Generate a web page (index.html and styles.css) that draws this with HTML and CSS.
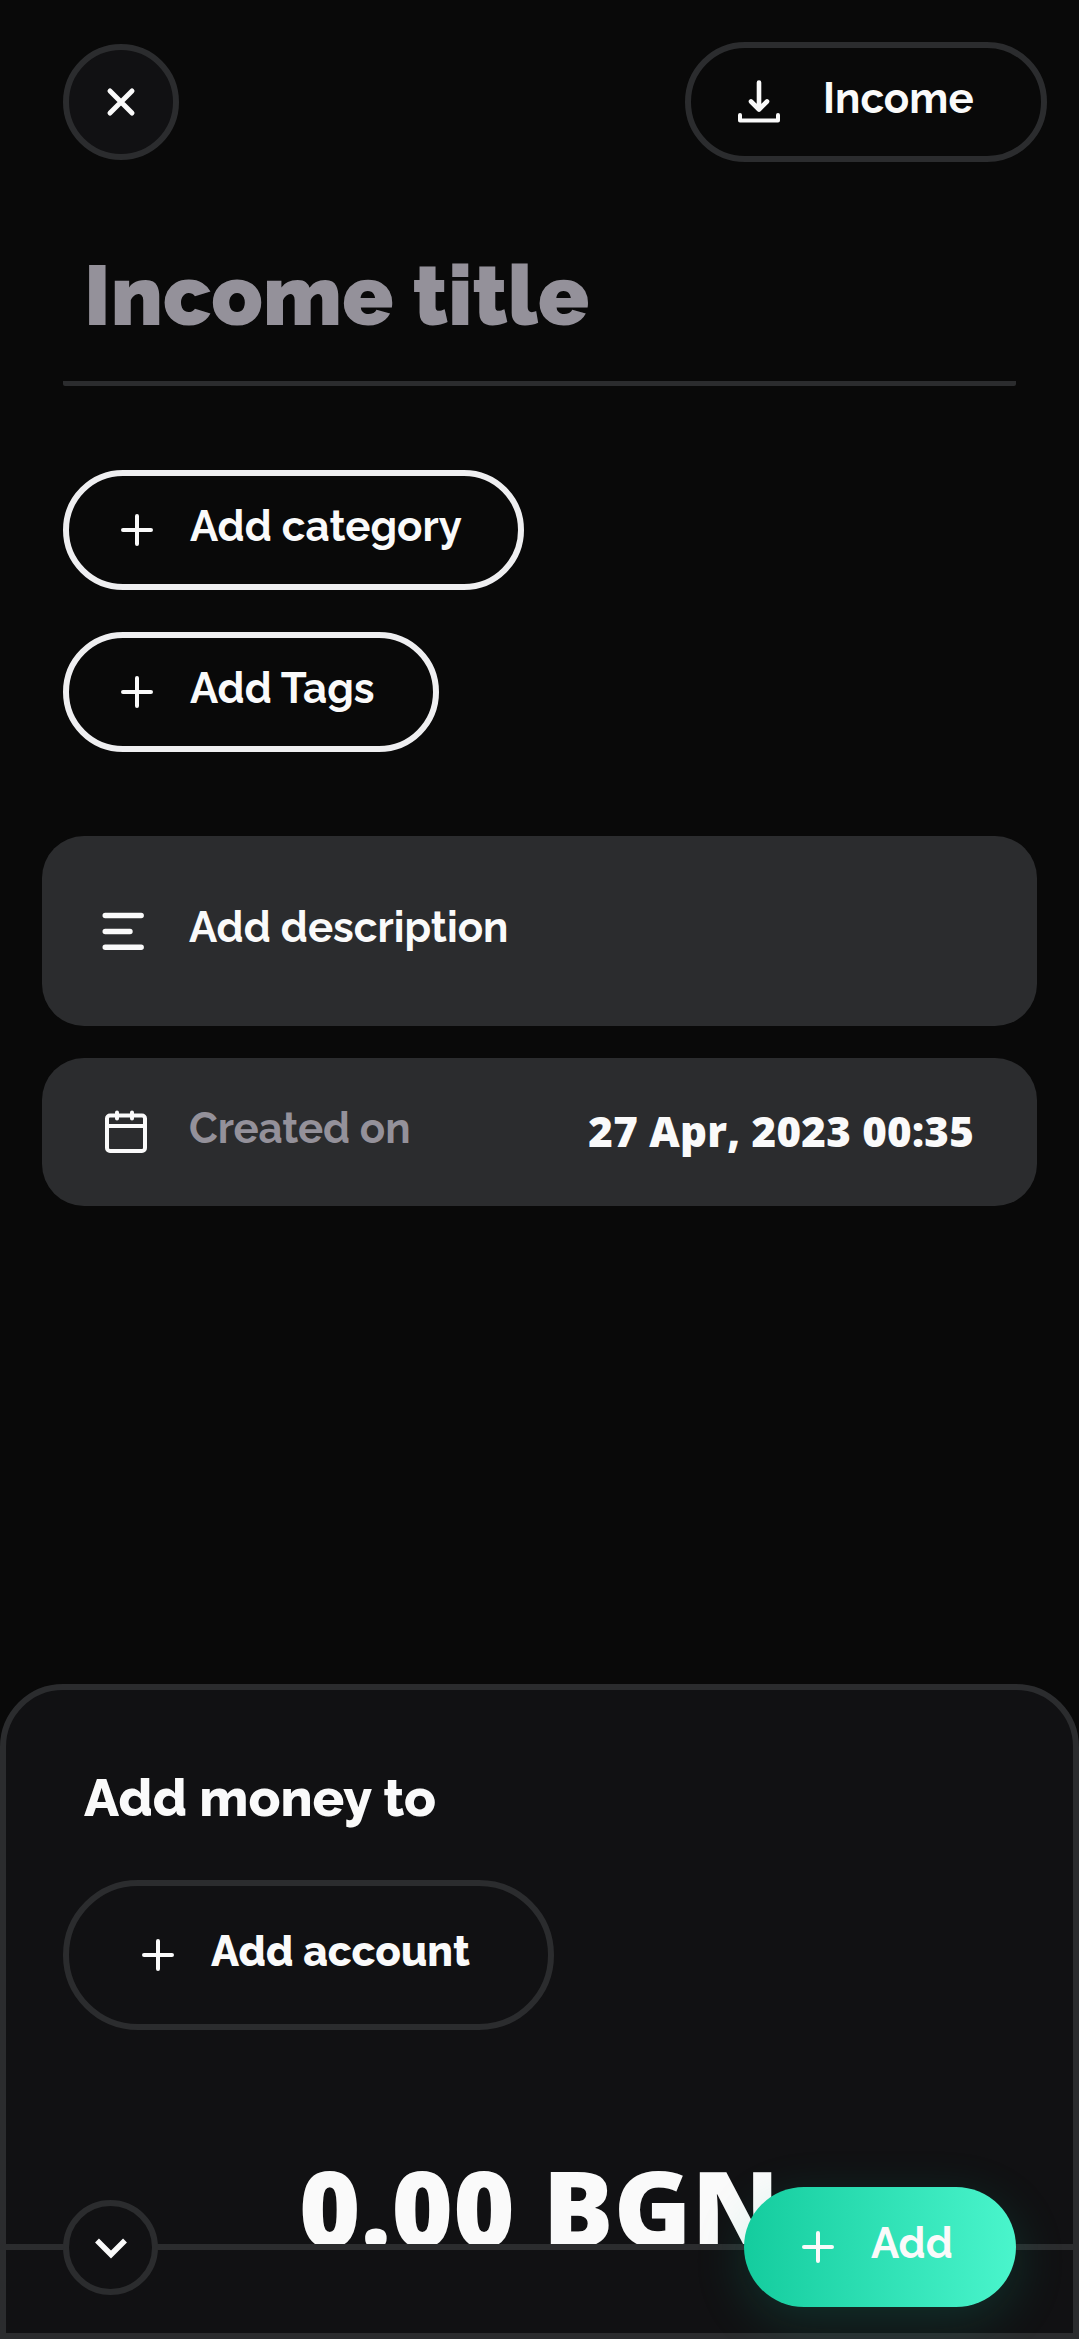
FILE: index.html
```html
<!DOCTYPE html>
<html lang="en">
<head>
<meta charset="utf-8">
<title>Income</title>
<link rel="stylesheet" href="styles.css">
</head>
<body>
<main class="screen">
  <header class="topbar">
    <button class="round close" aria-label="Close">
      <svg width="116" height="116" viewBox="0 0 116 116" class="icon"><path d="M47 47 69 69M69 47 47 69" stroke-width="5"/></svg>
    </button>
    <button class="pill type">
      <svg width="42" height="44" viewBox="0 0 42 44" class="icon"><path d="M21 2.500V29M13 21.500l8 8 8-8" stroke-width="4.600"/><path d="M2 35v5.500H40V35" stroke-width="4"/></svg>
      <span class="label">Income</span>
    </button>
  </header>

  <h1 class="title">Income title</h1>

  <section class="chips">
    <button class="pill light category">
      <svg width="32" height="32" viewBox="0 0 32 32" class="icon"><path d="M16 2V30M2 16H30" stroke-width="4"/></svg>
      <span class="label">Add category</span>
    </button>
    <button class="pill light tags">
      <svg width="32" height="32" viewBox="0 0 32 32" class="icon"><path d="M16 2V30M2 16H30" stroke-width="4"/></svg>
      <span class="label">Add Tags</span>
    </button>
  </section>

  <section class="cards">
    <div class="card description">
      <svg width="48" height="48" viewBox="0 0 48 48" class="icon"><path d="M6.200 8.500H42.200M6.200 24.500H31M6.200 40.300H42.200" stroke-width="5.400"/></svg>
      <span class="label">Add description</span>
    </div>
    <div class="card created">
      <svg width="48" height="48" viewBox="0 0 48 48" class="icon"><rect x="8" y="7.500" width="38" height="35.500" rx="3" stroke-width="4"/><path d="M8 18H46" stroke-width="4"/><path d="M18 4.500V10.500M33 4.500V10.500" stroke-width="4"/></svg>
      <span class="label muted">Created on</span>
      <time class="date">27 Apr, 2023 00:35</time>
    </div>
  </section>

  <section class="sheet">
    <h2 class="heading">Add money to</h2>
    <button class="pill account">
      <svg width="32" height="32" viewBox="0 0 32 32" class="icon"><path d="M16 2V30M2 16H30" stroke-width="4"/></svg>
      <span class="label strong">Add account</span>
    </button>
    <div class="amount">0.00 BGN</div>
    <footer class="actions">
      <button class="round collapse" aria-label="Collapse">
        <svg width="96" height="96" viewBox="0 0 96 96" class="icon sharp"><path d="M34 40.500 48 54.500 62 40.500" stroke-width="5.500"/></svg>
      </button>
      <button class="add">
        <svg width="32" height="32" viewBox="0 0 32 32" class="icon"><path d="M16 2V30M2 16H30" stroke-width="4"/></svg>
        <span class="label">Add</span>
      </button>
    </footer>
  </section>
</main>
</body>
</html>
```
FILE: styles.css
```css
* { box-sizing: border-box; }
body { margin: 0; background: #090909; color: #fafafa; }
button { margin: 0; padding: 0; border: 0; background: none; color: inherit; font: inherit; }
.screen {
  width: 1079px; height: 2339px; overflow: hidden;
  display: flex; flex-direction: column;
  font-family: Raleway, Lato, sans-serif;
  background: #090909;
}
.icon { display: block; flex: none; fill: none; stroke: #fafafa; stroke-linecap: round; stroke-linejoin: round; }
.sharp { stroke-linecap: butt; stroke-linejoin: miter; }
.round { display: flex; align-items: center; justify-content: center; border: 6px solid #2b2c2e; border-radius: 50%; background: #111113; }
.pill { display: flex; align-items: center; height: 120px; border: 6px solid #2b2c2e; border-radius: 75px; }
.label { font-size: 42px; line-height: 48px; font-weight: 700; white-space: nowrap; padding-bottom: 6px; }
.strong { font-weight: 800; }
.muted { color: #94919a; letter-spacing: -0.15px; }

.topbar { display: flex; justify-content: space-between; align-items: center; height: 204px; padding: 0 32px 0 63px; }
.close { width: 116px; height: 116px; }
.type { width: 362px; padding-left: 47px; gap: 43px; }

.title { margin: 0 63px; height: 182px; border-bottom: 5px solid #2b2c2e; border-radius: 2px; padding: 40px 0 0 21px; font-size: 84px; line-height: 104px; font-weight: 900; letter-spacing: 0.15px; color: #94919a; white-space: nowrap; }

.chips { display: flex; flex-direction: column; gap: 42px; padding: 84px 63px; }
.light { border-color: #efeff1; padding-left: 52px; gap: 37px; }
.category { width: 461px; }
.tags { width: 376px; }

.cards { display: flex; flex-direction: column; gap: 32px; padding: 0 42px; }
.card { display: flex; align-items: center; border-radius: 42px; background: #2b2c2e; padding: 0 63px 0 57px; gap: 42px; }
.description { height: 190px; }
.created { height: 148px; }
.date { margin-left: auto; padding-bottom: 2px; font: 800 42px/48px "Open Sans", sans-serif; letter-spacing: 0.25px; white-space: nowrap; }

.sheet { margin-top: auto; height: 655px; display: flex; flex-direction: column; border: 6px solid #2b2c2e; border-radius: 63px 63px 0 0; background: #111113; }
.heading { margin: 0; padding: 74px 0 0 78px; height: 190px; font-size: 52.500px; line-height: 68px; font-weight: 800; white-space: nowrap; }
.account { width: 491px; height: 150px; margin-left: 57px; padding-left: 73px; gap: 37px; }
/* The sum slides under the action bar, which covers its lower edge. */
.amount { height: 214px; padding: 105px 0 0 293px; font: 800 105px/143px "Open Sans", sans-serif; letter-spacing: 0.3px; white-space: nowrap; }
.actions { position: relative; height: 89px; display: flex; align-items: center; justify-content: space-between; border-top: 6px solid #2b2c2e; background: #111113; padding: 0 57px; }
.collapse { width: 95px; height: 95px; margin-top: -88px; }
.add { display: flex; align-items: center; gap: 37px; width: 272px; height: 120px; margin-top: -89px; padding-left: 58px; border-radius: 60px; background: linear-gradient(90deg, #14cc9e, #4af5cc); box-shadow: 0 14px 52px rgba(20, 204, 158, .17); }
```
